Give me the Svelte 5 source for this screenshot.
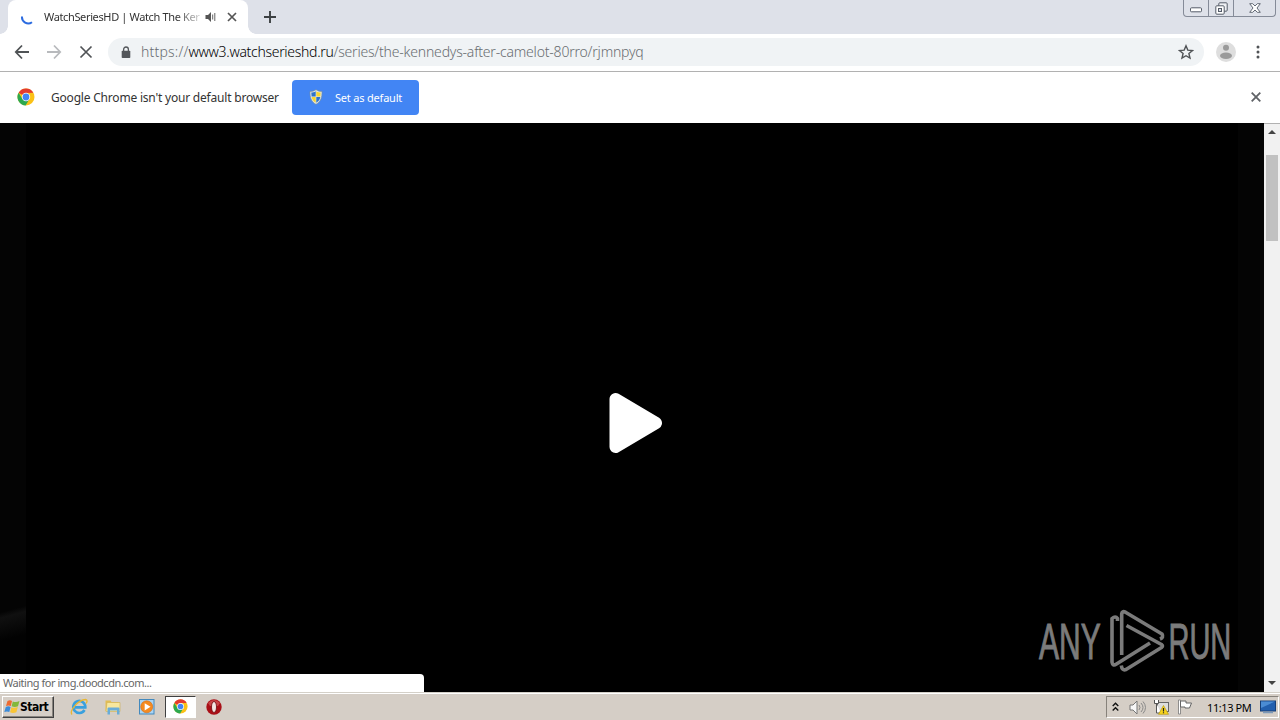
<script lang="ts">
  const pageUrl = {
    scheme: 'https://',
    host: 'www3.watchserieshd.ru',
    path: '/series/the-kennedys-after-camelot-80rro/rjmnpyq',
  };
  const tabTitle = 'WatchSeriesHD | Watch The Ker';
  const statusText = 'Waiting for img.doodcdn.com...';
  const clock = '11:13 PM';
</script>

{#snippet chromeLogo()}
  <svg class="chrome-logo" width="18" height="18" viewBox="0 0 18 18">
    <circle cx="9" cy="9" r="8.5" fill="#fbc116" />
    <path d="M9 9 L1.6 4.7 A8.5 8.5 0 0 1 16.4 4.8 L9 4.9Z" fill="#e33b2e" />
    <path d="M1.6 4.7 A8.5 8.5 0 0 0 8.6 17.5 L12.4 11 L9 9 L5.4 11Z" fill="#2da94f" />
    <circle cx="9" cy="9" r="4.2" fill="#fff" />
    <circle cx="9" cy="9" r="3.4" fill="#4285f4" />
  </svg>
{/snippet}

<div class="desktop">
  <div class="tabstrip">
    <div class="tab">
      <svg class="spinner" width="16" height="16" viewBox="0 0 16 16">
        <path d="M2 7.5 A6.3 6.3 0 0 0 12 13.2" fill="none" stroke="#2b6be0" stroke-width="2" />
      </svg>
      <span class="tab-title">{tabTitle}</span>
      <svg class="speaker" width="12" height="12" viewBox="0 0 12 12">
        <path d="M0.5 4h2.5l3-3v10l-3-3H0.5z" fill="#555" />
        <path d="M7.7 3.5v5M9.8 2v8" fill="none" stroke="#666" stroke-width="1" />
      </svg>
      <svg class="tab-close" width="10" height="10" viewBox="0 0 10 10">
        <path d="M1 1l8 8M9 1l-8 8" stroke="#555" stroke-width="1.7" />
      </svg>
    </div>
    <svg class="new-tab" width="12" height="12" viewBox="0 0 12 12">
      <path d="M6 0v12M0 6h12" stroke="#3c4043" stroke-width="1.9" />
    </svg>
    <div class="window-buttons">
      <span class="wb min">
        <svg width="13" height="6" viewBox="0 0 13 6"><rect x="0.5" y="0.8" width="11" height="4" rx="1" fill="#fff" stroke="#555c68" /></svg>
      </span>
      <span class="wb max">
        <svg width="13" height="13" viewBox="0 0 13 13">
          <rect x="3.8" y="0.8" width="8.4" height="8.4" rx="1" fill="#eef0f4" stroke="#555c68" />
          <rect x="0.8" y="3.8" width="8.4" height="8.4" rx="1" fill="#fff" stroke="#555c68" />
          <rect x="3.5" y="6.5" width="3" height="3" fill="#dee1e9" stroke="#555c68" />
        </svg>
      </span>
      <span class="wb close">
        <svg width="12" height="10" viewBox="0 0 12 10">
          <path d="M0.7 0.7h3L6 3l2.3-2.3h3L8 5l3.3 4.3h-3L6 7 3.7 9.3h-3L4 5z" fill="#fff" stroke="#555c68" stroke-width="0.9" />
        </svg>
      </span>
    </div>
  </div>

  <div class="toolbar">
    <svg class="nav" width="16" height="16" viewBox="0 0 16 16">
      <path d="M15 8H2M8 1.5L1.8 8L8 14.5" fill="none" stroke="#505356" stroke-width="1.8" />
    </svg>
    <svg class="nav" width="16" height="16" viewBox="0 0 16 16">
      <path d="M1 8H14M8 1.5L14.2 8L8 14.5" fill="none" stroke="#b8babd" stroke-width="1.8" />
    </svg>
    <svg class="nav" width="16" height="16" viewBox="0 0 16 16">
      <path d="M2.5 2.5l11 11M13.5 2.5l-11 11" stroke="#505356" stroke-width="1.7" />
    </svg>
    <div class="omnibox">
      <svg class="lock" width="10" height="13" viewBox="0 0 10 13">
        <rect x="0.7" y="4.7" width="8.6" height="7.3" rx="0.8" fill="#54575b" />
        <path d="M2.6 5V3.4a2.4 2.4 0 0 1 4.8 0V5" fill="none" stroke="#54575b" stroke-width="1.3" />
      </svg>
      <div class="url"><span class="scheme">{pageUrl.scheme}</span><b>{pageUrl.host}</b><span>{pageUrl.path}</span></div>
      <svg class="star" width="16" height="16" viewBox="0 0 16 16">
        <path d="M8 1.8l1.8 4.3 4.7.4-3.6 3 1.1 4.6L8 11.7l-4 2.4 1.1-4.6-3.6-3 4.7-.4z" fill="none" stroke="#505356" stroke-width="1.4" />
      </svg>
    </div>
    <svg class="avatar" width="20" height="20" viewBox="0 0 20 20">
      <circle cx="10" cy="10" r="10" fill="#dedede" />
      <circle cx="10" cy="5.8" r="3" fill="#9a9a9a" />
      <ellipse cx="10" cy="13.7" rx="6" ry="3.2" fill="#9a9a9a" />
    </svg>
    <svg class="menu" width="4" height="14" viewBox="0 0 4 14">
      <circle cx="2" cy="2" r="1.5" fill="#505356" />
      <circle cx="2" cy="7" r="1.5" fill="#505356" />
      <circle cx="2" cy="12" r="1.5" fill="#505356" />
    </svg>
  </div>

  <div class="infobar">
    {@render chromeLogo()}
    <span class="info-text">Google Chrome isn't your default browser</span>
    <button class="set-default">
      <svg width="14" height="16" viewBox="0 0 14 16">
        <path d="M7 0.7C5.2 2 3 2.5 1 2.5C1 8.5 2 12.5 7 15.3C12 12.5 13 8.5 13 2.5C11 2.5 8.8 2 7 0.7Z" fill="#dfe7ee" stroke="#7f8f8c" stroke-width="0.6" />
        <path d="M6.7 2.2C5.3 3.2 3.7 3.5 2.3 3.6L2.6 7.6H6.7Z" fill="#2f73c8" />
        <path d="M7.3 2.2C8.7 3.2 10.3 3.5 11.7 3.6L11.4 7.6H7.3Z" fill="#f7d530" />
        <path d="M2.7 8.1H6.7V13.7C4.3 12.4 3.1 10.6 2.7 8.1Z" fill="#f7d530" />
        <path d="M11.3 8.1H7.3V13.7C9.7 12.4 10.9 10.6 11.3 8.1Z" fill="#2f73c8" />
      </svg>
      <span>Set as default</span>
    </button>
    <svg class="info-close" width="10" height="10" viewBox="0 0 10 10">
      <path d="M0.7 0.7l8.6 8.6M9.3 0.7l-8.6 8.6" stroke="#606367" stroke-width="1.8" />
    </svg>
  </div>

  <div class="content">
    <div class="page">
      <div class="gutter left"></div>
      <div class="player">
        <svg class="play" width="54" height="62" viewBox="0 0 54 62">
          <path d="M6.5 7V55L47 31Z" fill="#fff" stroke="#fff" stroke-width="12" stroke-linejoin="round" />
        </svg>
      </div>
      <div class="gutter right"></div>

      <svg class="watermark" width="220" height="64" viewBox="0 0 220 64">
        <g fill="#7b7b7b" stroke="#7b7b7b" stroke-width="1">
          <text transform="translate(2 50) scale(0.6 1)">ANY</text>
          <text transform="translate(131.5 50) scale(0.58 1)">RUN</text>
        </g>
        <g fill="none" stroke="#7b7b7b" stroke-width="3.6" stroke-linejoin="round">
          <path d="M80.500 12V9.500Q78.500 6.500 75 9.500V53Q75.500 57.500 79.500 55L113 34" />
          <path d="M84.700 46V5Q85 1.500 88.500 3.200L125 25Q127 28.500 123 30" />
          <path d="M89.500 16.500L124.500 35.500Q126.500 37 124.500 38.500L89 60.500Q85 62 84.300 56.500" />
        </g>
      </svg>
      <div class="status">{statusText}</div>
    </div>
    <div class="scrollbar">
      <svg width="8" height="4" viewBox="0 0 8 4"><path d="M0 4L4 0L8 4Z" fill="#444" /></svg>
      <div class="thumb"></div>
      <svg class="down" width="8" height="4" viewBox="0 0 8 4"><path d="M0 0L4 4L8 0Z" fill="#444" /></svg>
    </div>
  </div>

  <div class="taskbar">
    <div class="start">
      <svg width="16" height="16" viewBox="0 0 16 16">
        <path d="M3.5 2Q6 .5 8 2L6.800 7Q4.500 5.800 2 7Z" fill="#ed6a31" />
        <path d="M8.800 2.400Q12 3.600 15.500 2L14 7.200Q11 8.500 7.600 7.300Z" fill="#83b83c" />
        <path d="M1.800 7.900Q4.500 6.700 6.600 8L5.300 13Q3 11.800 .3 13Z" fill="#3b8bd9" />
        <path d="M7.400 8.200Q10.500 9.400 13.800 8L12.400 13.200Q9 14.800 6.100 13.300Z" fill="#f9c536" />
      </svg>
      <b>Start</b>
    </div>
    <div class="launch">
      <svg width="18" height="18" viewBox="0 0 18 18">
        <path d="M14.500 12A6 6 0 1 1 15.300 9.300H5" fill="none" stroke="#39a0de" stroke-width="2.700" />
        <path d="M2 16.500C-1 13 8 2 15.500 1.500C18 2 17 4 16 5.500" fill="none" stroke="#e8b632" stroke-width="1.300" />
      </svg>
      <svg width="18" height="18" viewBox="0 0 18 18">
        <path d="M1.500 2.500h5l1 1.500h7V13h-13z" fill="#e3bd52" />
        <path d="M3 4.500h13v9H2z" fill="#f8e79d" stroke="#cfaf52" stroke-width="0.600" />
        <path d="M3.500 16.500v-6q0-1 1-1h10q1 0 1 1v6h-2.500v-4H6v4z" fill="#69acd8" />
      </svg>
      <svg width="18" height="18" viewBox="0 0 18 18">
        <rect x="1.500" y="1.500" width="14.500" height="14.500" fill="#a9d4f3" stroke="#4389bd" />
        <circle cx="8.700" cy="8.800" r="6" fill="#f58a1f" stroke="#d26a10" stroke-width="0.600" />
        <path d="M6.700 5.200V12.400L12.500 8.800Z" fill="#fff" />
      </svg>
    </div>
    <div class="task-active">{@render chromeLogo()}</div>
    <svg class="opera" width="16" height="16" viewBox="0 0 16 16">
      <circle cx="8" cy="8" r="7.700" fill="#a90f17" />
      <path d="M2 4Q8 -2 14 4L12 7H4Z" fill="#c94447" />
      <ellipse cx="8" cy="8" rx="2.500" ry="5.500" fill="#f3e6e3" stroke="#6b080c" stroke-width="0.800" />
    </svg>
    <div class="tray">
      <svg class="chevrons" width="7" height="10" viewBox="0 0 7 10">
        <path d="M0.700 4L3.500 1.200L6.300 4M0.700 8.500L3.500 5.700L6.300 8.500" fill="none" stroke="#111" stroke-width="1.400" />
      </svg>
      <svg class="volume" width="17" height="15" viewBox="0 0 17 15">
        <path d="M1 5h3l4-4v13l-4-4H1z" fill="#f7f7f7" stroke="#777" />
        <path d="M10 5q2 2.500 0 5M12 3q4 4.500 0 9M14 1.500q5 6 0 12" fill="none" stroke="#898989" />
      </svg>
      <svg class="network" width="17" height="16" viewBox="0 0 17 16">
        <rect x="4.500" y="3.500" width="11" height="9" fill="#ddd" stroke="#666" />
        <path d="M1.500 1v3.500h4V1M3.500 4.500V14H8" fill="#fff" stroke="#555" />
        <path d="M10.500 6.500L15.500 15.300H5.500Z" fill="#f7d41d" stroke="#b99b16" stroke-width="0.700" />
        <path d="M10.500 9v3.500M10.500 13.300v1" stroke="#222" stroke-width="1.200" />
      </svg>
      <svg class="flag" width="16" height="16" viewBox="0 0 16 16">
        <path d="M1.500 1h2v14h-2z" fill="#fff" stroke="#777" stroke-width="0.800" />
        <path d="M3.500 2h5.500v2h5.500l-2 5H8V8H3.500z" fill="#fff" stroke="#666" />
      </svg>
      <span class="clock">{clock}</span>
      <svg class="show-desktop" width="16" height="14" viewBox="0 0 16 14">
        <rect x="0.500" y="1" width="15" height="10" fill="#225fae" stroke="#173f77" />
        <path d="M1 1.500h14L1 8z" fill="#4b8cd4" />
        <path d="M3 12.500h10" stroke="#7d99b8" stroke-width="1.500" />
      </svg>
    </div>
  </div>
</div>

<style>
  :global(body) {
    overflow: hidden;
  }
  .desktop {
    display: flex;
    flex-direction: column;
    width: 1280px;
    height: 720px;
    overflow: hidden;
    background: #fff;
    font-family: 'Noto Sans', sans-serif;
    color: #333;
  }
  svg {
    display: block;
    flex: none;
  }
  span, b, .status {
    white-space: nowrap;
  }

  /* tabs */
  .tabstrip {
    display: flex;
    height: 34px;
    flex: none;
    background: #dee1e9;
  }
  .tab {
    position: relative;
    display: flex;
    align-items: center;
    box-sizing: border-box;
    width: 240px;
    margin-left: 8px;
    padding: 0 0 1px 12px;
    background: #fff;
    border-radius: 8px 8px 0 0;
  }
  /* flared feet of the active tab */
  .tab::before,
  .tab::after {
    content: '';
    position: absolute;
    bottom: 0;
    width: 8px;
    height: 8px;
  }
  .tab::before {
    left: -8px;
    background: radial-gradient(circle at 0 0, transparent 7.5px, #fff 8px);
  }
  .tab::after {
    right: -8px;
    background: radial-gradient(circle at 100% 0, transparent 7.5px, #fff 8px);
  }
  .tab-title {
    width: 156px;
    margin-left: 8px;
    font-size: 11px;
    letter-spacing: -0.36px;
    mask-image: linear-gradient(to right, #000 132px, transparent 162px);
  }
  .speaker {
    margin-left: 5px;
  }
  .tab-close {
    margin-left: 10px;
  }
  .new-tab {
    margin: 11px 0 0 16px;
  }
  .window-buttons {
    display: flex;
    box-sizing: border-box;
    width: 93px;
    height: 17px;
    margin: 0 4px 0 auto;
    border: 1px solid #858b98;
    border-top: 0;
    border-radius: 0 0 4px 4px;
  }
  .wb {
    display: flex;
    align-items: center;
    justify-content: center;
    width: 24px;
    border-right: 1px solid #858b98;
  }
  .wb.min {
    align-items: flex-end;
    padding-bottom: 3px;
    box-sizing: border-box;
    width: 25px;
  }
  .wb.close {
    flex: 1;
    border-right: 0;
  }

  /* toolbar */
  .toolbar {
    display: flex;
    align-items: center;
    box-sizing: border-box;
    height: 38px;
    flex: none;
    padding: 0 0 1px 14px;
    border-bottom: 1px solid #b1b1b1;
  }
  .nav {
    margin-right: 16px;
  }
  .omnibox {
    display: flex;
    align-items: center;
    box-sizing: border-box;
    width: 1096px;
    height: 28px;
    margin-left: -2px;
    padding: 0 10px 0 13px;
    border-radius: 14px;
    background: #f0f3f5;
  }
  .url {
    margin-left: 10px;
    font-size: 14px;
    font-weight: 300;
    line-height: 20px;
    color: #696d71;
    letter-spacing: -0.2px;
  }
  .url .scheme {
    letter-spacing: 0.2px;
  }
  .url b {
    font-weight: 300;
    color: #000;
    letter-spacing: -0.3px;
  }
  .star {
    margin-left: auto;
  }
  .avatar {
    margin-left: 12px;
  }
  .menu {
    margin-left: 20px;
  }

  /* default browser prompt */
  .infobar {
    display: flex;
    align-items: center;
    box-sizing: border-box;
    height: 51px;
    flex: none;
    padding: 0 19px 1px 17px;
  }
  .info-text {
    width: 229px;
    margin-left: 16px;
    font-size: 12px;
    letter-spacing: -0.2px;
  }
  .set-default {
    display: flex;
    align-items: center;
    box-sizing: border-box;
    width: 127px;
    height: 35px;
    margin: 1px 0 0 12px;
    padding: 0 0 1px 17px;
    border: 0;
    border-radius: 4px;
    background: #4285f4;
    color: #fff;
    font: 11px 'Noto Sans', sans-serif;
    letter-spacing: -0.2px;
  }
  .set-default span {
    margin-left: 12px;
  }
  .info-close {
    margin-left: auto;
  }

  /* page */
  .content {
    display: flex;
    height: 569px;
    flex: none;
  }
  .page {
    position: relative;
    display: flex;
    width: 1264px;
    background: #000;
  }
  .gutter {
    width: 26px;
    background: #040404;
  }
  .gutter.left {
    background: linear-gradient(165deg, #040404 0 85%, #101010 86%, #020202 90%);
  }
  .player {
    display: flex;
    flex: 1;
    align-items: center;
    justify-content: center;
    background: #000;
  }
  .play {
    margin: 31px 0 0 8px;
  }
  .watermark {
    position: absolute;
    left: 1037px;
    top: 486px;
  }
  .watermark text {
    font: 50px 'Liberation Sans', sans-serif;
  }
  .status {
    position: absolute;
    left: 0;
    bottom: 0;
    box-sizing: border-box;
    width: 424px;
    height: 18px;
    padding-left: 3px;
    border-radius: 0 4px 0 0;
    background: #fff;
    font-size: 11px;
    line-height: 18px;
    letter-spacing: -0.47px;
    color: #666;
  }
  .scrollbar {
    display: flex;
    flex-direction: column;
    align-items: center;
    box-sizing: border-box;
    width: 16px;
    padding: 6px 0 7px;
    background: #f1f1f1;
    border-top: 1px solid #b1b1b1;
  }
  .thumb {
    width: 12px;
    height: 86px;
    margin-top: 21px;
    background: #c1c1c1;
  }
  .down {
    margin-top: auto;
  }

  /* taskbar */
  .taskbar {
    display: flex;
    align-items: center;
    box-sizing: border-box;
    height: 28px;
    flex: none;
    border-top: 1px solid #d4d0c8;
    background: #d5cec6;
    box-shadow: inset 0 1px #fff;
  }
  .start {
    display: flex;
    align-items: center;
    box-sizing: border-box;
    width: 52px;
    height: 22px;
    margin: 1px 0 0 2px;
    padding-left: 1px;
    border: 1px solid;
    border-color: #fff #404040 #404040 #fff;
    box-shadow: inset -1px -1px #88847e;
    color: #000;
  }
  .start b {
    font-family: 'DejaVu Sans Condensed', 'DejaVu Sans', sans-serif;
    font-size: 12px;
    letter-spacing: -0.5px;
  }
  .launch {
    display: flex;
    gap: 16px;
    margin-left: 16px;
  }
  .task-active {
    display: flex;
    align-items: center;
    justify-content: center;
    box-sizing: border-box;
    width: 31px;
    height: 22px;
    margin-left: 9px;
    border: 1px solid;
    border-color: #404040 #fff #fff #404040;
    background: #fff;
  }
  .task-active .chrome-logo {
    width: 15px;
    height: 15px;
  }
  .opera {
    margin: 1px 0 0 10px;
  }
  .tray {
    display: flex;
    align-items: center;
    box-sizing: border-box;
    width: 173px;
    height: 22px;
    margin: 1px 1px 0 auto;
    padding-left: 5px;
    border: 1px solid;
    border-color: #87827b #fff #fff #87827b;
  }
  .volume {
    margin-left: 10px;
  }
  .network {
    margin-left: 7px;
  }
  .flag {
    margin-left: 7px;
  }
  .clock {
    width: 45px;
    margin-left: 14px;
    font-size: 11px;
    letter-spacing: -0.4px;
    color: #000;
  }
  .show-desktop {
    margin-left: 8px;
  }
</style>
